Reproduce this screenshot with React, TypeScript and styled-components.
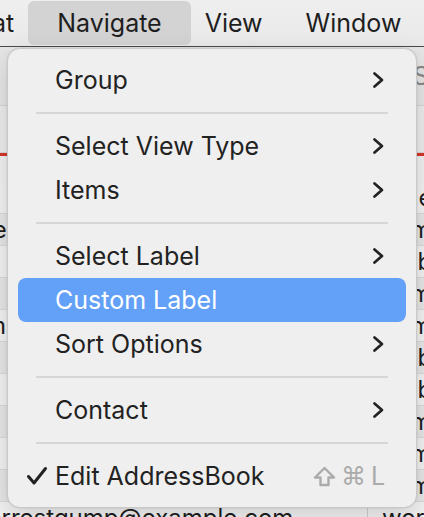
import React from 'react';
import styled, { createGlobalStyle } from 'styled-components';

const GlobalStyle = createGlobalStyle`
  html, body {
    margin: 0;
    padding: 0;
    background: #ececec;
  }
  body {
    font-family: Inter, "Liberation Sans", sans-serif;
    -webkit-font-smoothing: antialiased;
  }
`;

const Screen = styled.div`
  position: relative;
  width: 424px;
  height: 517px;
  overflow: hidden;
  background: #f2f2f2;
  display: flex;
  flex-direction: column;
`;

const MenuBar = styled.div`
  height: 46px;
  flex-shrink: 0;
  display: flex;
  align-items: stretch;
  margin-left: -90px;
  background: linear-gradient(#efefef, #e9e9e9);
  border-bottom: 1px solid #4a4a4a;
`;

const BarItem = styled.div<{ $active?: boolean }>`
  display: flex;
  align-items: center;
  padding: 0 ${(p) => (p.$active ? 29 : 21.5)}px;
  margin: ${(p) => (p.$active ? '1px -7.5px 1px' : '0')};
  border-radius: 6px;
  background: ${(p) => (p.$active ? '#d3d3d3' : 'transparent')};
  font-size: 25px;
  color: #1e1e1e;
  white-space: nowrap;
`;

const Window = styled.div`
  flex: 1;
  display: flex;
  flex-direction: column;
  overflow: hidden;
`;

const Toolbar = styled.div`
  height: 58px;
  flex-shrink: 0;
  background: #e6e6e6;
  border-bottom: 1px solid #d6d6d6;
  display: flex;
  align-items: center;
  justify-content: flex-end;
`;

const SearchHint = styled.span`
  font-size: 25px;
  color: #8a8a8a;
  margin-right: -72px;
`;

const HeaderRow = styled.div`
  height: 46px;
  flex-shrink: 0;
  background: #ededed;
  border-bottom: 1px solid #d8d8d8;
`;

const RedRule = styled.div`
  height: 3px;
  flex-shrink: 0;
  background: #d8352a;
`;

const Rows = styled.div`
  display: flex;
  flex-direction: column;
  margin-top: 26px;
`;

const Row = styled.div<{ $alt?: boolean }>`
  height: 31px;
  flex-shrink: 0;
  display: grid;
  grid-template-columns: 368px 1fr;
  align-items: center;
  background: ${(p) => (p.$alt ? '#e7e7e7' : '#f3f3f3')};
  border-bottom: 1px solid #dadada;
  font-size: 24px;
  color: #1e1e1e;
  white-space: nowrap;
  overflow: hidden;
`;

const EmailCell = styled.div<{ $indent: number }>`
  margin-left: -21px;
  padding-left: ${(p) => p.$indent}px;
  height: 100%;
  display: flex;
  align-items: center;
  border-right: 1px solid #cfcfcf;
  overflow: hidden;
`;

const KindCell = styled.div`
  padding-left: 14px;
`;

const Menu = styled.div`
  position: absolute;
  top: 48px;
  left: 7px;
  width: 410px;
  box-sizing: border-box;
  padding: 9px 10px 9px;
  background: #efefef;
  border: 1px solid #c9c9c9;
  border-radius: 13px;
  box-shadow: 0 8px 24px rgba(0, 0, 0, 0.16), 0 0 0 0.5px rgba(0, 0, 0, 0.08);
  display: flex;
  flex-direction: column;
`;

const Item = styled.div<{ $active?: boolean }>`
  height: 44px;
  display: flex;
  align-items: center;
  padding: 0 21px 0 37px;
  position: relative;
  border-radius: 8px;
  background: ${(p) => (p.$active ? '#63a0f7' : 'transparent')};
  color: ${(p) => (p.$active ? '#ffffff' : '#222222')};
  font-size: 25px;
  white-space: nowrap;
`;

const Label = styled.span`
  flex: 1;
`;

const Check = styled.svg`
  position: absolute;
  left: 8px;
  top: 12px;
`;

const Separator = styled.div`
  height: 22px;
  display: flex;
  align-items: center;
  padding: 0 18px;
  &::after {
    content: '';
    flex: 1;
    height: 2px;
    background: #d6d6d6;
  }
`;

const Shortcut = styled.span`
  display: flex;
  align-items: center;
  gap: 7px;
  color: #ababab;
  font-size: 25px;
  font-family: "DejaVu Sans", Inter, sans-serif;
`;

const Key = styled.span<{ $w: number }>`
  display: inline-flex;
  justify-content: center;
  width: ${(p) => p.$w}px;
`;

const Letter = styled(Key)`
  font-family: Inter, sans-serif;
`;

const Chevron = () => (
  <svg width="14" height="18" viewBox="0 0 14 18">
    <polyline
      points="3.5,2.5 11,9 3.5,15.5"
      fill="none"
      stroke="#222"
      strokeWidth="2.7"
      strokeLinecap="round"
      strokeLinejoin="round"
    />
  </svg>
);

const ShiftGlyph = () => (
  <svg width="23" height="21" viewBox="0 0 23 21">
    <path
      d="M11.5 2 L21 11.5 L15.5 11.5 L15.5 19 L7.5 19 L7.5 11.5 L2 11.5 Z"
      fill="none"
      stroke="#ababab"
      strokeWidth="2.4"
      strokeLinejoin="round"
    />
  </svg>
);

type Entry =
  | { kind: 'item'; label: string; sub?: boolean; active?: boolean; checked?: boolean; keys?: boolean }
  | { kind: 'sep' };

const entries: Entry[] = [
  { kind: 'item', label: 'Group', sub: true },
  { kind: 'sep' },
  { kind: 'item', label: 'Select View Type', sub: true },
  { kind: 'item', label: 'Items', sub: true },
  { kind: 'sep' },
  { kind: 'item', label: 'Select Label', sub: true },
  { kind: 'item', label: 'Custom Label', active: true },
  { kind: 'item', label: 'Sort Options', sub: true },
  { kind: 'sep' },
  { kind: 'item', label: 'Contact', sub: true },
  { kind: 'sep' },
  { kind: 'item', label: 'Edit AddressBook', checked: true, keys: true },
];

const rows: { email: string; kind: string; indent: number }[] = [
  { email: 'janedoe@example.com', kind: 'other', indent: 40 },
  { email: 'leetree@example.com', kind: 'home', indent: 8 },
  { email: 'bennyblue@example.com', kind: 'mobile', indent: 40 },
  { email: 'sammysmith@example.com', kind: 'home', indent: 40 },
  { email: 'mr-lee@example.com', kind: 'home', indent: 6 },
  { email: 'tomtom@example.com', kind: 'mobile', indent: 40 },
  { email: 'bobbyjones@example.com', kind: 'mobile', indent: 40 },
  { email: 'mollymay@example.com', kind: 'home', indent: 40 },
  { email: 'annamarie@example.com', kind: 'home', indent: 40 },
  { email: 'billbrown@example.com', kind: 'home', indent: 40 },
  { email: 'forrestgump@example.com', kind: 'work', indent: 0 },
];

export default function App() {
  return (
    <>
      <GlobalStyle />
      <Screen>
        <MenuBar>
          <BarItem>Format</BarItem>
          <BarItem $active>Navigate</BarItem>
          <BarItem>View</BarItem>
          <BarItem>Window</BarItem>
          <BarItem>Help</BarItem>
        </MenuBar>
        <Window>
          <Toolbar>
            <SearchHint>Search</SearchHint>
          </Toolbar>
          <HeaderRow />
          <RedRule />
          <Rows>
            {rows.map((r, i) => (
              <Row key={r.email} $alt={i % 2 === 1}>
                <EmailCell $indent={r.indent}>{r.email}</EmailCell>
                <KindCell>{r.kind}</KindCell>
              </Row>
            ))}
          </Rows>
        </Window>

        <Menu>
          {entries.map((e, i) =>
            e.kind === 'sep' ? (
              <Separator key={i} />
            ) : (
              <Item key={i} $active={e.active}>
                {e.checked && (
                  <Check width="22" height="20" viewBox="0 0 22 20">
                    <path
                      d="M2.5 10.5 L8 17 L19.5 2.5"
                      fill="none"
                      stroke="#222"
                      strokeWidth="3"
                      strokeLinecap="round"
                      strokeLinejoin="round"
                    />
                  </Check>
                )}
                <Label>{e.label}</Label>
                {e.sub && <Chevron />}
                {e.keys && (
                  <Shortcut>
                    <Key $w={23}>
                      <ShiftGlyph />
                    </Key>
                    <Key $w={21}>⌘</Key>
                    <Letter $w={14}>L</Letter>
                  </Shortcut>
                )}
              </Item>
            )
          )}
        </Menu>
      </Screen>
    </>
  );
}
